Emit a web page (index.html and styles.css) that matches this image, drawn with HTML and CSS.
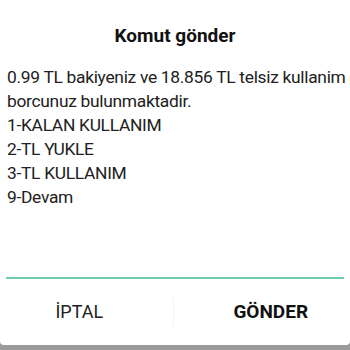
FILE: index.html
```html
<!DOCTYPE html>
<html lang="tr">
<head>
    <meta charset="UTF-8">
    <meta name="viewport" content="width=device-width, initial-scale=1.0">
    <title>Komut gönder</title>
    <link rel="stylesheet" href="styles.css">
</head>
<body>
    <div class="dialog">
        <h1 class="dialog-title">Komut gönder</h1>

        <div class="dialog-message">
            <p>0.99 TL bakiyeniz ve 18.856 TL telsiz kullanim borcunuz bulunmaktadir.</p>
            <p>1-KALAN KULLANIM</p>
            <p>2-TL YUKLE</p>
            <p>3-TL KULLANIM</p>
            <p>9-Devam</p>
        </div>

        <div class="dialog-input">
            <input type="text" aria-label="Yanıt">
        </div>

        <div class="dialog-actions">
            <button class="action action-cancel">İPTAL</button>
            <span class="action-divider"></span>
            <button class="action action-primary">GÖNDER</button>
        </div>
    </div>
</body>
</html>
```

FILE: styles.css
```css
html, body {
    margin: 0;
    height: 100%;
}
body {
    font-family: Roboto, "Noto Sans", sans-serif;
    background-color: #9b9b9b;
    color: #212121;
}
.dialog {
    height: 345px;
    background-color: #fff;
    border-radius: 0 0 4px 4px;
    display: flex;
    flex-direction: column;
}
.dialog-title {
    margin: 0;
    padding-top: 24px;
    font-size: 19px;
    line-height: 24px;
    font-weight: 700;
    text-align: center;
    color: #111;
}
.dialog-message {
    margin-top: 17px;
    padding: 0 4px 0 7px;
    font-size: 17.4px;
    line-height: 24px;
    letter-spacing: -0.3px;
}
.dialog-message p {
    margin: 0;
}
.dialog-input {
    margin: 0 6px;
    padding-top: 44px;
}
.dialog-input input {
    display: block;
    width: 100%;
    box-sizing: border-box;
    border: none;
    border-bottom: 2px solid #6fcfa8;
    outline: none;
    height: 26px;
    font: inherit;
    background: transparent;
}
.dialog-actions {
    flex: 1;
    display: flex;
    align-items: center;
}
.action {
    flex: 1;
    background: none;
    border: none;
    padding: 0;
    font-family: inherit;
    font-size: 18px;
    line-height: 24px;
    color: #212121;
    cursor: pointer;
}
.action-cancel {
    padding-right: 14px;
}
.action-primary {
    padding-left: 18px;
    font-size: 19px;
    font-weight: 700;
    color: #111;
}
.action-divider {
    width: 1px;
    height: 30px;
    background-color: #f5f5f5;
}
```
